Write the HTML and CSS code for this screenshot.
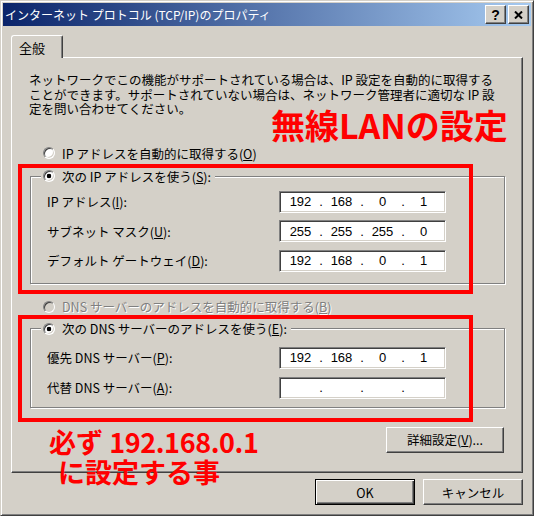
FILE: index.html
```html
<!DOCTYPE html>
<html lang="ja">
<head>
<meta charset="utf-8">
<title>インターネット プロトコル (TCP/IP)のプロパティ</title>
<link rel="stylesheet" href="styles.css">
</head>
<body>
<div class="window">
  <div class="titlebar">
    <span class="title-text">インターネット プロトコル (TCP/IP)のプロパティ</span>
    <div class="title-buttons">
      <span class="tbtn help">?</span>
      <span class="tbtn close"><svg width="9" height="8" viewBox="0 0 9 8"><path d="M1 0.5L8 7.5M8 0.5L1 7.5" stroke="#000" stroke-width="2" fill="none"/></svg></span>
    </div>
  </div>
  <div class="client">
    <div class="tabs"><div class="tab">全般</div></div>
    <div class="panel">
      <p class="desc">ネットワークでこの機能がサポートされている場合は、IP 設定を自動的に取得する<br>ことができます。サポートされていない場合は、ネットワーク管理者に適切な IP 設<br>定を問い合わせてください。</p>
      <div class="opt opt-auto-ip"><span class="radio"></span><span>IP アドレスを自動的に取得する(<u>O</u>)</span></div>
      <fieldset class="group group-ip">
        <legend><span class="opt"><span class="radio checked"></span><span>次の IP アドレスを使う(<u>S</u>):</span></span></legend>
        <div class="fields fields-ip">
          <label>IP アドレス(<u>I</u>):</label>
          <div class="ipbox"><span class="seg">192</span><span class="dot">.</span><span class="seg">168</span><span class="dot">.</span><span class="seg">0</span><span class="dot">.</span><span class="seg">1</span></div>
          <label>サブネット マスク(<u>U</u>):</label>
          <div class="ipbox"><span class="seg">255</span><span class="dot">.</span><span class="seg">255</span><span class="dot">.</span><span class="seg">255</span><span class="dot">.</span><span class="seg">0</span></div>
          <label>デフォルト ゲートウェイ(<u>D</u>):</label>
          <div class="ipbox"><span class="seg">192</span><span class="dot">.</span><span class="seg">168</span><span class="dot">.</span><span class="seg">0</span><span class="dot">.</span><span class="seg">1</span></div>
        </div>
      </fieldset>
      <div class="opt opt-auto-dns disabled"><span class="radio"></span><span>DNS サーバーのアドレスを自動的に取得する(<u>B</u>)</span></div>
      <fieldset class="group group-dns">
        <legend><span class="opt"><span class="radio checked"></span><span>次の DNS サーバーのアドレスを使う(<u>E</u>):</span></span></legend>
        <div class="fields fields-dns">
          <label>優先 DNS サーバー(<u>P</u>):</label>
          <div class="ipbox"><span class="seg">192</span><span class="dot">.</span><span class="seg">168</span><span class="dot">.</span><span class="seg">0</span><span class="dot">.</span><span class="seg">1</span></div>
          <label>代替 DNS サーバー(<u>A</u>):</label>
          <div class="ipbox"><span class="seg"></span><span class="dot">.</span><span class="seg"></span><span class="dot">.</span><span class="seg"></span><span class="dot">.</span><span class="seg"></span></div>
        </div>
      </fieldset>
      <div class="adv"><button class="btn btn-adv">詳細設定(<u>V</u>)...</button></div>
    </div>
    <div class="footer">
      <button class="btn btn-default">OK</button>
      <button class="btn">キャンセル</button>
    </div>
  </div>
  <div class="mark mark-ip"></div>
  <div class="mark mark-dns"></div>
  <div class="note note-title">無線LANの設定</div>
  <div class="note note-ip">必ず <span class="num">192.168.0.1</span><br><span class="indent">に設定する事</span></div>
</div>
</body>
</html>
```
FILE: styles.css
```css
* { box-sizing: border-box; }
html, body { margin: 0; padding: 0; }
body {
  width: 534px;
  height: 516px;
  overflow: hidden;
  background: #d4d0c8;
  font-family: "Noto Sans CJK JP", "Noto Sans", sans-serif;
  font-size: 12.5px;
  color: #000;
}
u { text-decoration: underline; text-underline-offset: 1px; }

.window {
  position: relative;
  width: 534px;
  height: 516px;
  background: #d4d0c8;
  border: 1px solid;
  border-color: #d4d0c8 #404040 #404040 #d4d0c8;
  box-shadow: inset 1px 1px 0 #fff, inset -1px -1px 0 #808080;
  padding: 2px;
  display: flex;
  flex-direction: column;
}

.titlebar {
  flex: none;
  height: 23px;
  display: flex;
  align-items: center;
  justify-content: space-between;
  padding: 0 2px;
  background: linear-gradient(to right, #0a246a, #a6caf0);
  color: #fff;
  font-size: 12px;
}
.title-text { white-space: nowrap; line-height: 1; }
.title-buttons { display: flex; gap: 2px; }
.tbtn {
  width: 21px;
  height: 19px;
  background: #d4d0c8;
  border: 1px solid;
  border-color: #fff #404040 #404040 #fff;
  box-shadow: inset -1px -1px 0 #808080;
  display: flex;
  align-items: center;
  justify-content: center;
  color: #000;
}
.help {
  font-family: "Liberation Sans", Arial, sans-serif;
  font-weight: bold;
  font-size: 14px;
  line-height: 1;
}

.client {
  flex: 1;
  padding: 9px 8px 0 8px;
  display: flex;
  flex-direction: column;
}
.tabs { display: flex; height: 22px; }
.tab {
  position: relative;
  z-index: 1;
  width: 52px;
  height: 23px;
  margin-bottom: -1px;
  padding-left: 7px;
  display: flex;
  align-items: center;
  background: #d4d0c8;
  border-top: 1px solid #fff;
  border-left: 1px solid #fff;
  border-right: 1px solid #404040;
  border-radius: 3px 2px 0 0;
  box-shadow: inset -1px 0 0 #808080;
  font-size: 13px;
}

.panel {
  height: 416px;
  border: 1px solid;
  border-color: #fff #404040 #404040 #fff;
  box-shadow: inset -1px -1px 0 #808080;
  padding: 0 17px 0 18px;
  display: flex;
  flex-direction: column;
}
.desc {
  margin: 15px 0 0 -1px;
  line-height: 14.5px;
  white-space: nowrap;
}

.opt {
  display: flex;
  align-items: center;
  height: 15px;
  white-space: nowrap;
}
.opt-auto-ip { margin: 29px 0 0 13px; }
.opt-auto-dns { margin: 15.5px 0 0 13px; }
.disabled { color: #808080; text-shadow: 1px 1px 0 #fff; }
.radio {
  flex: none;
  width: 12px;
  height: 12px;
  margin-right: 7px;
  border-radius: 50%;
  background: #fff;
  border: 1px solid;
  border-color: #808080 #fff #fff #808080;
  box-shadow: inset 1px 1px 0 #404040, inset -1px -1px 0 #d4d0c8;
}
.radio.checked { background: radial-gradient(circle, #000 0, #000 2px, #fff 2.6px); }
.disabled .radio { background: #d4d0c8; }

.group {
  margin: 8px 0 0 0;
  padding: 7px 0 11px 10px;
  min-width: 0;
  border: 1px solid #808080;
  box-shadow: inset 1px 1px 0 #fff, 1px 1px 0 #fff;
}
.group legend {
  padding: 0 4px 0 2px;
  background: #d4d0c8;
}
.group-dns { margin-top: 7px; padding: 10.5px 0 8px 10px; }

.fields {
  display: grid;
  grid-template-columns: 238px 167px;
  row-gap: 7.5px;
  align-items: center;
}
.fields-dns { row-gap: 8px; }
.fields label { padding-left: 6px; white-space: nowrap; }

.ipbox {
  width: 167px;
  height: 22px;
  background: #fff;
  border: 1px solid;
  border-color: #808080 #fff #fff #808080;
  box-shadow: inset 1px 1px 0 #404040, inset -1px -1px 0 #d4d0c8;
  display: flex;
  align-items: center;
  padding-left: 3px;
  font-family: "Liberation Sans", Arial, sans-serif;
  font-size: 13px;
}
.seg { width: 35px; text-align: center; }
.dot { width: 6px; text-align: center; }

.adv {
  display: flex;
  justify-content: flex-end;
  margin-top: 19px;
}
.btn {
  height: 26px;
  width: 100px;
  padding: 0;
  margin: 0;
  background: #d4d0c8;
  border: 1px solid;
  border-color: #fff #404040 #404040 #fff;
  box-shadow: inset -1px -1px 0 #808080;
  font-family: "Noto Sans CJK JP", "Noto Sans", sans-serif;
  font-size: 12.5px;
  color: #000;
}
.btn-adv { width: 118px; margin-right: 1px; }
.btn-default {
  border: 1px solid #000;
  box-shadow: inset 1px 1px 0 #fff, inset -1px -1px 0 #404040, inset -2px -2px 0 #808080;
}
.footer {
  display: flex;
  justify-content: flex-end;
  gap: 8px;
  margin-top: 6px;
}

.mark {
  position: absolute;
  border: 4px solid #ff0000;
}
.mark-ip { left: 17px; top: 163px; width: 455px; height: 130px; }
.mark-dns { left: 17px; top: 314px; width: 455px; height: 107px; }

.note {
  position: absolute;
  color: #ff0000;
  font-family: "Noto Sans CJK JP", "Noto Sans", sans-serif;
  font-weight: bold;
  white-space: nowrap;
}
.note-title { left: 270px; top: 107px; font-size: 34px; line-height: 34px; }
.note-ip { left: 48px; top: 426px; font-size: 27px; line-height: 30px; }
.note-ip .num { letter-spacing: -0.4px; }
.note-ip .indent { padding-left: 9px; }
```
